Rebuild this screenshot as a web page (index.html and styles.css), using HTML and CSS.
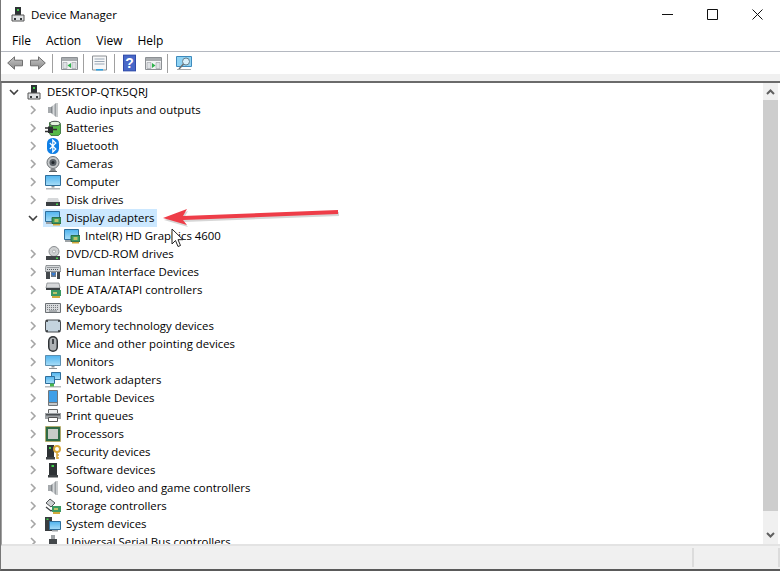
FILE: index.html
```html
<!doctype html>
<html>
<head>
    <meta charset="utf-8">
    <title>Device Manager</title>
    <link rel="stylesheet" href="styles.css">
</head>
<body>
<svg class="defs" xmlns="http://www.w3.org/2000/svg">
    <defs>
        <linearGradient id="screen" x1="0" y1="0" x2="0" y2="1"><stop offset="0" stop-color="#4fb3ee"/><stop offset="1" stop-color="#a9def8"/></linearGradient>
        <linearGradient id="steel" x1="0" y1="0" x2="1" y2="0"><stop offset="0" stop-color="#6d7378"/><stop offset=".5" stop-color="#d5d8da"/><stop offset="1" stop-color="#8b9094"/></linearGradient>
        <linearGradient id="navback" x1="0" y1="0" x2="0" y2="1"><stop offset="0" stop-color="#c6c6c6"/><stop offset="1" stop-color="#8a8a8a"/></linearGradient>
        <symbol id="i-tower" viewBox="0 0 16 16">
            <path d="M5 1h6v8H5z" fill="#2e3235"/><path d="M7 3h2v2H7z" fill="#3fd34a"/>
            <path d="M2 9h12v6H2z" fill="#dfe1e3" stroke="#555" stroke-width="1"/>
            <path d="M4 12h2v2H4zM10 12h2v2h-2z" fill="#34383b"/>
        </symbol>
        <symbol id="i-audio" viewBox="0 0 16 16">
            <path d="M3 5h3v6H3z" fill="#a6aaad"/><path d="M6 5l5-4v14l-5-4z" fill="url(#steel)"/><path d="M11 1h2v14h-2z" fill="#c9cccd"/>
        </symbol>
        <symbol id="i-battery" viewBox="0 0 16 16">
            <path d="M4.500 2.500h10l1 2v9l-2 2H6l-1.500-2z" fill="#55b947" stroke="#2d6a30" stroke-width=".8"/>
            <ellipse cx="10" cy="3.500" rx="5" ry="2.200" fill="#e4f3de" stroke="#33413a" stroke-width=".9"/>
            <path d="M0 8h4M0 11.500h4" stroke="#333" stroke-width="1.300"/><path d="M3 6.500h5v6.500H3z" fill="#2a2e31"/><path d="M7 9.500h5" stroke="#333" stroke-width="1.500"/>
        </symbol>
        <symbol id="i-bluetooth" viewBox="0 0 16 16">
            <rect x="2" y="0" width="12" height="16" rx="5.500" fill="#0f7fe6"/>
            <path d="M4.800 5l6 6-3 3V2l3 3-6 6" fill="none" stroke="#fff" stroke-width="1.200"/>
        </symbol>
        <symbol id="i-camera" viewBox="0 0 16 16">
            <circle cx="8" cy="6.500" r="6" fill="#c4c7c9" stroke="#6c7175"/><circle cx="8" cy="6.500" r="3.500" fill="#596066"/><circle cx="8" cy="6.500" r="1.500" fill="#20262b"/>
            <path d="M6 12.500h4l1 2.500H5z" fill="#85898c"/><path d="M4 15h8v1H4z" fill="#5d6164"/>
        </symbol>
        <symbol id="i-computer" viewBox="0 0 16 16">
            <path d="M.5 1.500h15v10H.5z" fill="url(#screen)" stroke="#2f6f9c"/>
            <path d="M6.500 12h3v1.500h-3z" fill="#8b9094"/><path d="M1 14h14v1.500H1z" fill="#b3b7ba"/>
        </symbol>
        <symbol id="i-disk" viewBox="0 0 16 16">
            <path d="M3 6h10l2 5H1z" fill="#d6d8da"/><path d="M1 10h14v4H1z" fill="#3b3f42"/><path d="M11 11.500h2v1.500h-2z" fill="#46d34f"/>
        </symbol>
        <symbol id="i-display" viewBox="0 0 16 16">
            <path d="M.5 1.500h14v10H.5z" fill="url(#screen)" stroke="#2f6f9c"/>
            <path d="M1 12h7v2H1z" fill="#9ea3a6"/>
            <path d="M7 7.500h9v6H7z" fill="#3c9a62" stroke="#1e5f33" stroke-width=".8"/><path d="M9.500 9h4v3h-4z" fill="#b9c46a"/><path d="M8 14h7v1.500H8z" fill="#d0a93d"/>
        </symbol>
        <symbol id="i-dvd" viewBox="0 0 16 16">
            <circle cx="9" cy="5.500" r="5" fill="#cfd1d2" stroke="#8a8d90"/><circle cx="9" cy="5.500" r="1.500" fill="#f5f5f5" stroke="#8a8d90" stroke-width=".6"/>
            <path d="M1 10h14v4H1z" fill="#3f4346"/><path d="M11 11.500h2v1.500h-2z" fill="#46d34f"/>
        </symbol>
        <symbol id="i-hid" viewBox="0 0 16 16">
            <path d="M1 1.500h14l1 6H0z" fill="#d5d8da" stroke="#6c7175" stroke-width=".7"/>
            <path d="M2.500 3.500h11M2 5.500h12" stroke="#555b60" stroke-width="1" stroke-dasharray="1 1"/>
            <path d="M1 8h4v7H1zM12 8h3v7h-3z" fill="#44494d"/><path d="M6 8h5v5H6z" fill="#6d7a88"/><path d="M7 9l1.500 2L10 9" stroke="#2d7ce0" stroke-width="1.300" fill="none"/>
        </symbol>
        <symbol id="i-ide" viewBox="0 0 16 16">
            <path d="M2 1h12l1 5H1z" fill="#d6d8da" stroke="#7a7e81" stroke-width=".7"/><path d="M1 6h14v2H1z" fill="#3b3f42"/>
            <path d="M6 8h10v6H6z" fill="#3c9a62"/><path d="M8 10h4v2H8z" fill="#b9c46a"/><path d="M7 14h8v2H7z" fill="#d0a93d"/>
        </symbol>
        <symbol id="i-keyboard" viewBox="0 0 16 16">
            <path d="M.5 3.500h15v9H.5z" fill="#d9dbdd" stroke="#6c7175"/>
            <path d="M2 5.500h12M2 7.500h12M2 9.500h12" stroke="#777c80" stroke-width="1" stroke-dasharray="1 1"/>
            <path d="M4 11h8" stroke="#777c80"/>
        </symbol>
        <symbol id="i-memory" viewBox="0 0 16 16">
            <rect x=".5" y="2" width="15" height="12" rx="1.500" fill="#c4d4df" stroke="#484c50"/>
            <path d="M1 3h2M13 3h2M1 13h2M13 13h2" stroke="#2b2e31" stroke-width="1.500"/>
        </symbol>
        <symbol id="i-mouse" viewBox="0 0 16 16">
            <rect x="3" y="0" width="10" height="16" rx="5" fill="#2f3336"/><rect x="4.500" y="1.500" width="7" height="13" rx="3.500" fill="#aeb2b5"/>
            <path d="M7 3h2v5H7z" fill="#44494d"/>
        </symbol>
        <symbol id="i-monitor" viewBox="0 0 16 16">
            <path d="M.5 1.500h15v10H.5z" fill="url(#screen)" stroke="#5c8fb0"/>
            <path d="M6.500 12h3v1.500h-3z" fill="#8b9094"/><path d="M4 14h8v1H4z" fill="#8b9094"/>
        </symbol>
        <symbol id="i-network" viewBox="0 0 16 16">
            <path d="M6.500.5h9v7h-9z" fill="url(#screen)" stroke="#2f6f9c"/><path d="M.5 4.500h9v7h-9z" fill="url(#screen)" stroke="#2f6f9c"/>
            <path d="M0 14h16v1.500H0z" fill="#b7bbbd"/><path d="M5 11.500h4v3H5z" fill="#49b54e"/>
        </symbol>
        <symbol id="i-portable" viewBox="0 0 16 16">
            <rect x="3" y="0" width="10" height="16" rx="1" fill="#70767b"/><path d="M4 1h8v11H4z" fill="#3f9fe8"/><path d="M4 13h8v2H4z" fill="#c5c8ca"/>
        </symbol>
        <symbol id="i-printer" viewBox="0 0 16 16">
            <path d="M3.500 1.500h9v4h-9z" fill="#eceeef" stroke="#666"/><path d="M0 5h16v6H0z" fill="#9ea2a5"/><path d="M1 6h14v1.500H1z" fill="#4b4f52"/>
            <path d="M3.500 9.500h9v4h-9z" fill="#fff" stroke="#555"/>
        </symbol>
        <symbol id="i-cpu" viewBox="0 0 16 16">
            <path d="M.5.500h15v15H.5z" fill="#2f6b45" stroke="#c5a13c" stroke-dasharray="1 1"/><path d="M1.500 1.500h13v13h-13z" fill="#2f6b45"/><path d="M3 3h10v10H3z" fill="#c8ccc8"/>
        </symbol>
        <symbol id="i-security" viewBox="0 0 16 16">
            <path d="M2 1h7v12H2z" fill="#2e3235"/><path d="M4 3h2v2H4z" fill="#3fd34a"/><path d="M1 13h9v2.500H1z" fill="#3e4245"/>
            <circle cx="12" cy="5" r="3" fill="none" stroke="#d7a73a" stroke-width="2"/><path d="M12 8v7M12 11h2M12 14h2" stroke="#d7a73a" stroke-width="1.600"/>
        </symbol>
        <symbol id="i-software" viewBox="0 0 16 16">
            <path d="M4 1h8v12H4z" fill="#2e3235"/><path d="M6.500 3h2.500v2H6.500z" fill="#3fd34a"/><path d="M3 13h10v2.500H3z" fill="#3e4245"/>
        </symbol>
        <symbol id="i-storage" viewBox="0 0 16 16">
            <path d="M1 5l4-4 5 4-4 4z" fill="#ced1d3" stroke="#3f4346" stroke-width=".9"/><path d="M1 9l5 4 3-2" fill="none" stroke="#3f4346" stroke-width="1.300"/>
            <path d="M7 8h9v6H7z" fill="#3c9a62"/><path d="M9 10h4v2H9z" fill="#b9c46a"/><path d="M8 14h7v2H8z" fill="#d0a93d"/>
        </symbol>
        <symbol id="i-system" viewBox="0 0 16 16">
            <path d="M0 1h7v14H0z" fill="#383c3f"/><path d="M1.500 2.500h2v1.500h-2z" fill="#3fd34a"/>
            <path d="M4.500 5.500h11v8h-11z" fill="url(#screen)" stroke="#2f6f9c"/><path d="M7 14h6v1.500H7z" fill="#9ea3a6"/>
        </symbol>
        <symbol id="i-usb" viewBox="0 0 16 16">
            <path d="M6 1h4v4H6z" fill="#9fa3a6"/><path d="M4 5h8v11H4z" fill="#44484b"/>
        </symbol>
        <symbol id="i-panel" viewBox="0 0 17 16">
            <path d="M.5 2.500h16v12H.5z" fill="#f3f4f5" stroke="#8c9094"/><path d="M1 3h15v3H1z" fill="#a9adb0"/>
            <path d="M2 7.500h4v6H2zM11 7.500h4v6h-4z" fill="#dfe2e5" stroke="#9a9ea2" stroke-width=".6"/>
        </symbol>
    </defs>
</svg>

<div class="window">
    <header class="titlebar">
        <svg class="title-icon"><use href="#i-tower"/></svg>
        <span class="title-text">Device Manager</span>
        <div class="window-buttons">
            <button class="win-btn"><svg width="11" height="11"><path d="M0 5.500h11" stroke="#111"/></svg></button>
            <button class="win-btn"><svg width="11" height="11"><path d="M.5.500h10v10H.5z" fill="none" stroke="#111"/></svg></button>
            <button class="win-btn"><svg width="11" height="11"><path d="M.5.500l10 10M10.500.500l-10 10" fill="none" stroke="#111"/></svg></button>
        </div>
    </header>

    <nav class="menubar">
        <span>File</span>
        <span>Action</span>
        <span>View</span>
        <span>Help</span>
    </nav>

    <div class="toolbar">
        <svg class="tool-nav" viewBox="0 0 16 14"><path d="M.7 7L7.500.8v3.400h8v5.600h-8v3.400z" fill="url(#navback)" stroke="#6f6f6f"/></svg>
        <svg class="tool-nav" viewBox="0 0 16 14"><path d="M15.300 7L8.500.8v3.400h-8v5.600h8v3.400z" fill="url(#navback)" stroke="#6f6f6f"/></svg>
        <i class="tool-sep"></i>
        <svg class="tool-icon" viewBox="0 0 17 16"><use href="#i-panel"/><path d="M10 8v5L6.500 10.500z" fill="#2fb24c"/></svg>
        <i class="tool-sep"></i>
        <svg class="tool-icon" viewBox="0 0 17 16"><path d="M.5 1h14v14H.5z" fill="#f6f7f8" stroke="#8c9094"/><path d="M2.500 4h10M2.500 6.500h10M2.500 9h10" stroke="#9aa7b5"/><path d="M4 14h7v1.500H4z" fill="#27a3e6"/></svg>
        <i class="tool-sep"></i>
        <svg class="tool-help" viewBox="0 0 14 18"><rect width="14" height="18" fill="#2f4aa8"/><rect x="1" y="1" width="12" height="16" fill="#4868c8"/><text x="7" y="14.500" class="help-mark">?</text></svg>
        <svg class="tool-icon tool-after-help" viewBox="0 0 17 16"><use href="#i-panel"/><path d="M7 8v5l3.500-2.500z" fill="#2fb24c"/></svg>
        <i class="tool-sep"></i>
        <svg class="tool-icon" viewBox="0 0 17 16"><path d="M.5 1.500h15v10H.5z" fill="#8fd3f4" stroke="#3f8bbd"/><circle cx="10" cy="6.500" r="3.500" fill="#d9f0fb" stroke="#6a7f8c"/><path d="M7.500 9L3 14" stroke="#6a6f73" stroke-width="1.500"/><path d="M1 14.500h14" stroke="#a5a9ac"/></svg>
    </div>

    <div class="toolstrip"></div>

    <div class="content">
        <main class="tree">
            <div class="row level-0"><svg class="twisty" viewBox="0 0 10 10"><path d="M1 3l4 4 4-4" class="open"/></svg><span class="node"><svg class="icon"><use href="#i-tower"/></svg><span class="label">DESKTOP-QTK5QRJ</span></span></div>
            <div class="row"><svg class="twisty" viewBox="0 0 10 10"><path d="M3 1l4 4-4 4"/></svg><span class="node"><svg class="icon"><use href="#i-audio"/></svg><span class="label">Audio inputs and outputs</span></span></div>
            <div class="row"><svg class="twisty" viewBox="0 0 10 10"><path d="M3 1l4 4-4 4"/></svg><span class="node"><svg class="icon"><use href="#i-battery"/></svg><span class="label">Batteries</span></span></div>
            <div class="row"><svg class="twisty" viewBox="0 0 10 10"><path d="M3 1l4 4-4 4"/></svg><span class="node"><svg class="icon"><use href="#i-bluetooth"/></svg><span class="label">Bluetooth</span></span></div>
            <div class="row"><svg class="twisty" viewBox="0 0 10 10"><path d="M3 1l4 4-4 4"/></svg><span class="node"><svg class="icon"><use href="#i-camera"/></svg><span class="label">Cameras</span></span></div>
            <div class="row"><svg class="twisty" viewBox="0 0 10 10"><path d="M3 1l4 4-4 4"/></svg><span class="node"><svg class="icon"><use href="#i-computer"/></svg><span class="label">Computer</span></span></div>
            <div class="row"><svg class="twisty" viewBox="0 0 10 10"><path d="M3 1l4 4-4 4"/></svg><span class="node"><svg class="icon"><use href="#i-disk"/></svg><span class="label">Disk drives</span></span></div>
            <div class="row"><svg class="twisty" viewBox="0 0 10 10"><path d="M1 3l4 4 4-4" class="open"/></svg><span class="node selected"><svg class="icon"><use href="#i-display"/></svg><span class="label">Display adapters</span></span></div>
            <div class="row level-2"><span class="node"><svg class="icon"><use href="#i-display"/></svg><span class="label">Intel(R) HD Graphics 4600</span></span></div>
            <div class="row"><svg class="twisty" viewBox="0 0 10 10"><path d="M3 1l4 4-4 4"/></svg><span class="node"><svg class="icon"><use href="#i-dvd"/></svg><span class="label">DVD/CD-ROM drives</span></span></div>
            <div class="row"><svg class="twisty" viewBox="0 0 10 10"><path d="M3 1l4 4-4 4"/></svg><span class="node"><svg class="icon"><use href="#i-hid"/></svg><span class="label">Human Interface Devices</span></span></div>
            <div class="row"><svg class="twisty" viewBox="0 0 10 10"><path d="M3 1l4 4-4 4"/></svg><span class="node"><svg class="icon"><use href="#i-ide"/></svg><span class="label">IDE ATA/ATAPI controllers</span></span></div>
            <div class="row"><svg class="twisty" viewBox="0 0 10 10"><path d="M3 1l4 4-4 4"/></svg><span class="node"><svg class="icon"><use href="#i-keyboard"/></svg><span class="label">Keyboards</span></span></div>
            <div class="row"><svg class="twisty" viewBox="0 0 10 10"><path d="M3 1l4 4-4 4"/></svg><span class="node"><svg class="icon"><use href="#i-memory"/></svg><span class="label">Memory technology devices</span></span></div>
            <div class="row"><svg class="twisty" viewBox="0 0 10 10"><path d="M3 1l4 4-4 4"/></svg><span class="node"><svg class="icon"><use href="#i-mouse"/></svg><span class="label">Mice and other pointing devices</span></span></div>
            <div class="row"><svg class="twisty" viewBox="0 0 10 10"><path d="M3 1l4 4-4 4"/></svg><span class="node"><svg class="icon"><use href="#i-monitor"/></svg><span class="label">Monitors</span></span></div>
            <div class="row"><svg class="twisty" viewBox="0 0 10 10"><path d="M3 1l4 4-4 4"/></svg><span class="node"><svg class="icon"><use href="#i-network"/></svg><span class="label">Network adapters</span></span></div>
            <div class="row"><svg class="twisty" viewBox="0 0 10 10"><path d="M3 1l4 4-4 4"/></svg><span class="node"><svg class="icon"><use href="#i-portable"/></svg><span class="label">Portable Devices</span></span></div>
            <div class="row"><svg class="twisty" viewBox="0 0 10 10"><path d="M3 1l4 4-4 4"/></svg><span class="node"><svg class="icon"><use href="#i-printer"/></svg><span class="label">Print queues</span></span></div>
            <div class="row"><svg class="twisty" viewBox="0 0 10 10"><path d="M3 1l4 4-4 4"/></svg><span class="node"><svg class="icon"><use href="#i-cpu"/></svg><span class="label">Processors</span></span></div>
            <div class="row"><svg class="twisty" viewBox="0 0 10 10"><path d="M3 1l4 4-4 4"/></svg><span class="node"><svg class="icon"><use href="#i-security"/></svg><span class="label">Security devices</span></span></div>
            <div class="row"><svg class="twisty" viewBox="0 0 10 10"><path d="M3 1l4 4-4 4"/></svg><span class="node"><svg class="icon"><use href="#i-software"/></svg><span class="label">Software devices</span></span></div>
            <div class="row"><svg class="twisty" viewBox="0 0 10 10"><path d="M3 1l4 4-4 4"/></svg><span class="node"><svg class="icon"><use href="#i-audio"/></svg><span class="label">Sound, video and game controllers</span></span></div>
            <div class="row"><svg class="twisty" viewBox="0 0 10 10"><path d="M3 1l4 4-4 4"/></svg><span class="node"><svg class="icon"><use href="#i-storage"/></svg><span class="label">Storage controllers</span></span></div>
            <div class="row"><svg class="twisty" viewBox="0 0 10 10"><path d="M3 1l4 4-4 4"/></svg><span class="node"><svg class="icon"><use href="#i-system"/></svg><span class="label">System devices</span></span></div>
            <div class="row"><svg class="twisty" viewBox="0 0 10 10"><path d="M3 1l4 4-4 4"/></svg><span class="node"><svg class="icon"><use href="#i-usb"/></svg><span class="label">Universal Serial Bus controllers</span></span></div>
        </main>
        <aside class="scrollbar">
            <div class="scroll-btn"><svg width="9" height="6"><path d="M1 5l3.500-3.500L8 5" fill="none" stroke="#606060" stroke-width="2"/></svg></div>
            <div class="scroll-thumb"></div>
            <div class="scroll-rest"><svg width="9" height="6"><path d="M1 1l3.500 3.500L8 1" fill="none" stroke="#606060" stroke-width="2"/></svg></div>
        </aside>
    </div>

    <footer class="statusbar">
        <div class="status-main"></div>
        <div class="status-side"></div>
    </footer>

    <svg class="red-arrow" width="190" height="30" viewBox="160 202 190 30">
        <path d="M163 218l24-9-4 7 155-6v4l-155 6 4 5z" fill="#8a8a8a" opacity=".35" transform="translate(1 2)"/>
        <path d="M163 218l24-9-4 7 155-6v4l-155 6 4 5z" fill="#ee3d48"/>
    </svg>
    <svg class="pointer" width="14" height="20" viewBox="0 0 14 20">
        <path d="M1 1v15l3.500-3.500 2.500 6 2.500-1-2.500-5.800H12z" fill="#fff" stroke="#222" stroke-width="1"/>
    </svg>
</div>
</body>
</html>
```

FILE: styles.css
```css
html {
    background: #fff;
}

body {
    margin: 0;
    overflow: hidden;
}

.defs {
    position: absolute;
    width: 0;
    height: 0;
}

.window {
    position: relative;
    display: flex;
    flex-direction: column;
    width: 780px;
    height: 571px;
    box-sizing: border-box;
    border-left: 1px solid #777;
    border-bottom: 2px solid #5a5a5a;
    background: #fff;
    font-family: "Open Sans", "Noto Sans", sans-serif;
    font-size: 11.4px;
    color: #000;
    overflow: hidden;
}

.titlebar {
    display: flex;
    align-items: center;
    height: 28px;
    flex: none;
}

.title-icon {
    width: 16px;
    height: 16px;
    margin-left: 9px;
}

.title-text {
    margin-left: 5px;
    font-size: 11.5px;
}

.window-buttons {
    display: flex;
    margin-left: auto;
}

.win-btn {
    display: flex;
    align-items: center;
    justify-content: center;
    width: 45px;
    height: 28px;
    padding: 0;
    border: 0;
    background: none;
}

.menubar {
    display: flex;
    align-items: center;
    gap: 15px;
    height: 23px;
    flex: none;
    padding-left: 11px;
    border-bottom: 1px solid #b4b8c0;
    font-size: 12px;
}

.menubar span {
    padding-top: 2px;
}

.toolbar {
    display: flex;
    align-items: center;
    height: 22px;
    flex: none;
    padding-left: 6px;
}

.tool-nav {
    width: 16px;
    height: 14px;
    margin-right: 7px;
}

.tool-icon {
    width: 17px;
    height: 16px;
}

.tool-help {
    width: 13px;
    height: 18px;
}

.help-mark {
    font-family: "Liberation Sans", sans-serif;
    font-size: 15px;
    font-weight: bold;
    fill: #fff;
    text-anchor: middle;
}

.tool-after-help {
    margin-left: 9px;
}

.tool-sep {
    width: 1px;
    height: 19px;
    margin: 0 8px 0 0;
    background: #a0a0a0;
}

.tool-icon + .tool-sep {
    margin-left: 5px;
}

.tool-nav + .tool-sep {
    margin-left: -1px;
}

.toolstrip {
    height: 7px;
    flex: none;
    background: #f0f0f0;
    border-bottom: 2px solid #6b6b6b;
    box-sizing: content-box;
}

.content {
    display: flex;
    height: 461px;
    flex: none;
    border-left: 1px solid #a0a0a0;
    border-bottom: 2px solid #e3e3e3;
}

.tree {
    flex: 1;
    min-width: 0;
    overflow: hidden;
    white-space: nowrap;
}

.row {
    display: flex;
    align-items: center;
    height: 18px;
    padding-left: 26px;
}

.level-0 {
    padding-left: 7px;
}

.level-2 {
    padding-left: 60px;
}

.twisty {
    width: 10px;
    height: 10px;
    margin-right: 5px;
    flex: none;
}

.twisty path {
    fill: none;
    stroke: #a6a6a6;
    stroke-width: 1.6;
}

.twisty path.open {
    stroke: #404040;
}

.node {
    display: flex;
    align-items: center;
    gap: 5px;
    height: 18px;
    padding: 0 2px;
}

.label {
    padding-bottom: 2px;
}

.selected {
    background: #cce8ff;
}

.icon {
    width: 16px;
    height: 16px;
    flex: none;
}

.scrollbar {
    display: flex;
    flex-direction: column;
    flex: none;
    width: 15px;
    margin-right: 2px;
    background: #f0f0f0;
}

.scroll-btn {
    display: flex;
    align-items: center;
    justify-content: center;
    height: 17px;
}

.scroll-thumb {
    height: 411px;
    background: #cdcdcd;
}

.scroll-rest {
    display: flex;
    flex: 1;
    align-items: flex-end;
    justify-content: center;
    padding-bottom: 6px;
}

.statusbar {
    display: flex;
    flex: 1;
    padding: 2px 0;
    background: #f0f0f0;
}

.status-main {
    width: 691px;
    border-right: 2px solid #dcdcdc;
}

.status-side {
    width: 84px;
    border-right: 2px solid #dcdcdc;
}

.red-arrow {
    position: absolute;
    left: 159px;
    top: 202px;
}

.pointer {
    position: absolute;
    left: 170px;
    top: 228px;
}
```
